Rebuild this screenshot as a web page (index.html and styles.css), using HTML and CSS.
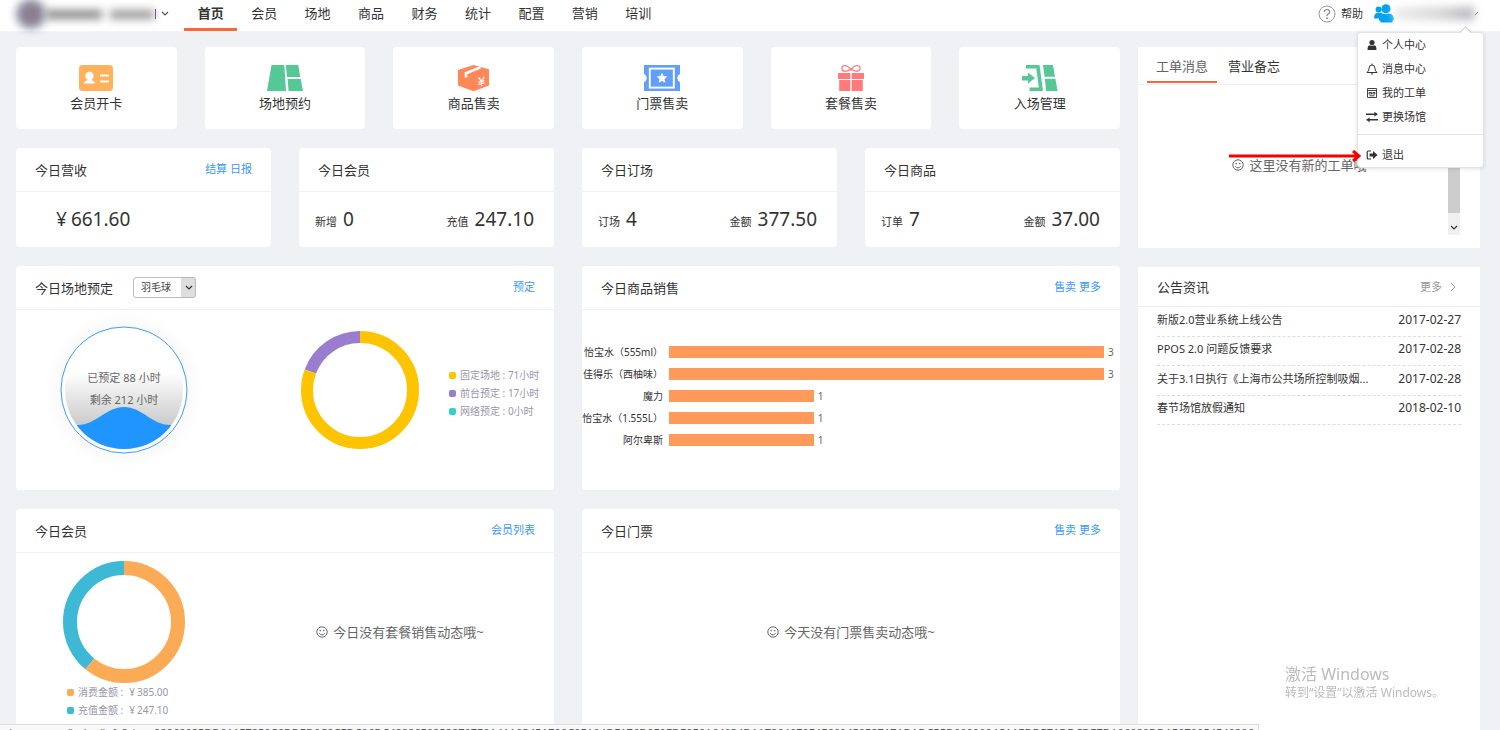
FILE: index.html
```html
<!DOCTYPE html>
<html lang="zh-CN">
<head>
<meta charset="utf-8">
<title>首页</title>
<link rel="stylesheet" href="styles.css">
</head>
<body>
<svg class="defs" aria-hidden="true">
  <symbol id="smile" viewBox="0 0 12 12"><circle cx="6" cy="6" r="5.2" fill="none" stroke="currentColor"/><circle cx="4.2" cy="4.6" r=".8" fill="currentColor"/><circle cx="7.8" cy="4.6" r=".8" fill="currentColor"/><path d="M3.2 7.2Q6 10.6 8.8 7.2" fill="none" stroke="currentColor"/></symbol>
  <symbol id="down" viewBox="0 0 8 6"><path d="M1 1l3 3 3-3" fill="none" stroke="currentColor" stroke-width="1.2"/></symbol>
</svg>

<header class="topbar">
  <button class="brand" aria-label="切换场馆">
    <span class="brand-logo"></span><span class="brand-name"></span><span class="brand-name short"></span>
    <span class="brand-edge"></span>
    <svg class="caret"><use href="#down"/></svg>
  </button>
  <nav class="nav">
    <a href="#" class="active">首页</a><a href="#">会员</a><a href="#">场地</a><a href="#">商品</a><a href="#">财务</a><a href="#">统计</a><a href="#">配置</a><a href="#">营销</a><a href="#">培训</a>
  </nav>
  <div class="account">
    <a href="#" class="help"><svg class="help-icon" viewBox="0 0 18 18"><circle cx="9" cy="9" r="8" fill="none" stroke="#999"/><path d="M6.4 7Q6.4 4.5 9 4.5T11.6 6.9Q11.6 8.1 10.2 9Q9 9.8 9 11" fill="none" stroke="#888" stroke-width="1.2"/><circle cx="9" cy="13.2" r=".9" fill="#888"/></svg>帮助</a>
    <button class="user" aria-label="账户菜单">
      <svg class="users-icon" viewBox="0 0 20 20" fill="#00a4ee"><circle cx="4.6" cy="5.4" r="3"/><path d="M0 14.5Q0 9.2 3.6 8.8H8V14.5z"/><circle cx="12" cy="4.8" r="4.6"/><path d="M5 16.5Q5 10.2 9 9.6Q12 11 15 9.6Q19.8 10.2 19.8 15.5Q19.8 16.8 18.4 16.8V18.6H6.4V16.8Z"/></svg>
      <span class="user-name"></span>
      <svg class="user-tick" viewBox="0 0 5 6"><path d="M1 4l3-3" stroke="#777" fill="none"/></svg>
    </button>
    <div class="menu">
      <ul>
        <li><a href="#"><svg viewBox="0 0 12 12"><circle cx="6" cy="3.6" r="2.6" fill="#333"/><path d="M1.6 11V9Q1.6 6.4 4 6.2Q6 7.4 8 6.2Q10.4 6.4 10.4 9V11z" fill="#333"/></svg>个人中心</a></li>
        <li><a href="#"><svg viewBox="0 0 12 12" fill="none" stroke="#333"><path d="M1 9.5Q3 8 3 5.5Q3 2 6 2T9 5.5Q9 8 11 9.5zM6 .6V2M5 10.6Q6 11.8 7 10.6"/></svg>消息中心</a></li>
        <li><a href="#"><svg viewBox="0 0 12 12" fill="none" stroke="#444"><path d="M1.5 1.5h9v9h-9zM1.5 3.5h9M3 5.5h2.5v1.5H3zM6.8 5.5H9v1.5H6.8zM3.5 8.8h5"/></svg>我的工单</a></li>
        <li><a href="#"><svg viewBox="0 0 12 12"><path d="M0 3.2h9M3 8.8h9" stroke="#333" stroke-width="1.5"/><path d="M8.4.8L12 3.2 8.4 5.6zM3.6 6.4L0 8.8 3.6 11.2z" fill="#333"/></svg>更换场馆</a></li>
      </ul>
      <ul class="menu-foot">
        <li><a href="#"><svg viewBox="0 0 12 12"><path d="M5 2H2.5Q1.2 2 1.2 3.3V8.7Q1.2 10 2.5 10H5" fill="none" stroke="#333" stroke-width="1.2"/><path d="M3.6 4.5H7V2L11.6 6 7 10V7.5H3.6z" fill="#333"/></svg>退出</a></li>
      </ul>
      <svg class="pointer" viewBox="0 0 132 14"><path d="M0 7H130M124 2l6 5-6 5" fill="none" stroke="#f60000" stroke-width="3"/></svg>
    </div>
  </div>
</header>

<main class="page">
  <div class="main-col">
    <section class="tiles">
      <a href="#" class="card tile"><svg viewBox="0 0 36 28"><rect x="1" y="1" width="34" height="26" rx="3.5" fill="#ffb25b"/><circle cx="11.5" cy="12" r="4.2" fill="#fff"/><path d="M5.6 19.6Q7 16.4 10 16H13Q16 16.4 17.4 19.6z" fill="#fff"/><path d="M22 11.5h9M22 17.5h9" stroke="#fff" stroke-width="1.8"/></svg>会员开卡</a>
      <a href="#" class="card tile"><svg viewBox="0 0 36 28" fill="#55c896"><path d="M4.5 1H17.3L19 27H0zM18.8 1H31.2L33.3 13H20zM20.6 15H33.8L36 27H21.6z"/></svg>场地预约</a>
      <a href="#" class="card tile"><svg viewBox="0 0 36 28"><path d="M17.5 1L33 5.2V21.5L17.5 27.2 2 21.5V6z" fill="#ff8758"/><path d="M10 13.5V9.2L24.5 3.4" fill="none" stroke="#fff" stroke-width="2.6"/><path d="M22.5 13.5l3 3.5 2.8-4.2M25.5 17v5M22.4 18.2l6-1.6M22.4 20.5l6-1.6" fill="none" stroke="#fff" stroke-width="1.3"/></svg>商品售卖</a>
      <a href="#" class="card tile"><svg viewBox="0 0 36 28"><path d="M0 1H36V10Q33.3 11 33.3 14T36 18V27H0V18Q2.7 17 2.7 14T0 10z" fill="#619ff8"/><rect x="5.8" y="4.6" width="24" height="19" fill="none" stroke="#fff" stroke-width="1.9"/><path d="M18 8.6l1.6 3.5 3.8.4-2.9 2.5.9 3.8L18 16.9l-3.4 1.9.9-3.8-2.9-2.5 3.8-.4z" fill="#fff"/></svg>门票售卖</a>
      <a href="#" class="card tile"><svg viewBox="0 0 36 28"><path d="M18 6Q15 1.2 11.5 1.6Q8.4 2.2 9 5Q9.8 7.8 13 7.2Q16 7 18 4.8Q20 7 23 7.2Q26.2 7.8 27 5Q27.6 2.2 24.5 1.6Q21 1.2 18 6z" fill="none" stroke="#ff7a7a" stroke-width="1.3"/><path d="M5 9H17.3V15H5zM18.7 9H31V15H18.7zM6.2 16H17.3V27H6.2zM18.7 16H29.8V27H18.7z" fill="#ff7a7a"/></svg>套餐售卖</a>
      <a href="#" class="card tile"><svg viewBox="0 0 36 28" fill="#55c896"><path d="M4 1H17.5L21 27H7.5V23.4H16.8L14.3 4.6H4zM0 12H6V8.4L13 14 6 19.6V16.4H0zM21 1H31L33 12.8H22.6zM22.8 14.8H33.4L35.6 27H24.2z"/></svg>入场管理</a>
    </section>

    <section class="stats">
      <article class="card">
        <div class="card-head"><h2>今日营收</h2><p class="links"><a href="#">结算</a> <a href="#">日报</a></p></div>
        <div class="stat-row single"><p class="money"><span class="yen">¥</span>661.60</p></div>
      </article>
      <article class="card">
        <div class="card-head"><h2>今日会员</h2></div>
        <div class="stat-row"><p>新增<b>0</b></p><p>充值<b>247.10</b></p></div>
      </article>
      <article class="card">
        <div class="card-head"><h2>今日订场</h2></div>
        <div class="stat-row"><p>订场<b>4</b></p><p>金额<b>377.50</b></p></div>
      </article>
      <article class="card">
        <div class="card-head"><h2>今日商品</h2></div>
        <div class="stat-row"><p>订单<b>7</b></p><p>金额<b>37.00</b></p></div>
      </article>
    </section>

    <section class="panels">
      <article class="card panel">
        <div class="card-head"><h2>今日场地预定</h2>
          <label class="picker"><select aria-label="运动项目"><option>羽毛球</option></select><svg><use href="#down"/></svg></label>
          <p class="links"><a href="#">预定</a></p></div>
        <div class="booking">
          <svg class="gauge" viewBox="0 0 160 160">
            <defs>
              <linearGradient id="shade" x1="0" y1="0" x2="0" y2="1"><stop offset=".35" stop-color="#fff"/><stop offset=".85" stop-color="#c4c4c4"/></linearGradient>
              <radialGradient id="halo"><stop offset=".78" stop-color="#000" stop-opacity=".025"/><stop offset="1" stop-color="#000" stop-opacity="0"/></radialGradient>
              <clipPath id="bowl"><circle cx="80" cy="80" r="59"/></clipPath>
            </defs>
            <circle cx="80" cy="80" r="80" fill="url(#halo)"/>
            <circle cx="80" cy="80" r="63" fill="#fff" stroke="#3d9cfb"/>
            <g clip-path="url(#bowl)"><path d="M21 21H139V139H21z" fill="url(#shade)"/><path d="M21 115H34C52 115 62 97 80 97S108 115 126 115H139V140H21z" fill="#2094ff"/></g>
            <text x="80" y="72">已预定 88 小时</text><text x="80" y="94">剩余 212 小时</text>
          </svg>
          <svg class="donut" viewBox="0 0 118 118" fill="none" stroke-width="12"><circle cx="59" cy="59" r="53" stroke="#9b7dcf" pathLength="88" stroke-dasharray="0 71 17" transform="rotate(-90 59 59)"/><circle cx="59" cy="59" r="53" stroke="#ffc400" pathLength="88" stroke-dasharray="71 17" transform="rotate(-90 59 59)"/></svg>
          <ul class="legend"><li class="gold">固定场地 : 71小时</li><li class="purple">前台预定 : 17小时</li><li class="teal">网络预定 : 0小时</li></ul>
        </div>
      </article>
      <article class="card panel">
        <div class="card-head"><h2>今日商品销售</h2><p class="links"><a href="#">售卖</a> <a href="#">更多</a></p></div>
        <div class="bars">
          <span class="name">怡宝水（555ml）</span><div class="track"><i style="width:100%"></i>3</div>
          <span class="name">佳得乐（西柚味）</span><div class="track"><i style="width:100%"></i>3</div>
          <span class="name">魔力</span><div class="track"><i style="width:33.3%"></i>1</div>
          <span class="name">怡宝水（1.555L）</span><div class="track"><i style="width:33.3%"></i>1</div>
          <span class="name">阿尔卑斯</span><div class="track"><i style="width:33.3%"></i>1</div>
        </div>
      </article>
      <article class="card panel">
        <div class="card-head"><h2>今日会员</h2><p class="links"><a href="#">会员列表</a></p></div>
        <div class="members">
          <div class="member-chart">
            <svg class="donut" viewBox="0 0 122 122" fill="none" stroke-width="14"><circle cx="61" cy="61" r="54" stroke="#3eb9d5" pathLength="632.1" stroke-dasharray="0 385 247.1" transform="rotate(-90 61 61)"/><circle cx="61" cy="61" r="54" stroke="#fbab55" pathLength="632.1" stroke-dasharray="385 247.1" transform="rotate(-90 61 61)"/></svg>
            <ul class="legend"><li class="orange">消费金额 :<span class="yen">¥</span>385.00</li><li class="cyan">充值金额 :<span class="yen">¥</span>247.10</li></ul>
          </div>
          <p class="empty"><svg><use href="#smile"/></svg>今日没有套餐销售动态哦~</p>
        </div>
      </article>
      <article class="card panel">
        <div class="card-head"><h2>今日门票</h2><p class="links"><a href="#">售卖</a> <a href="#">更多</a></p></div>
        <p class="empty tickets"><svg><use href="#smile"/></svg>今天没有门票售卖动态哦~</p>
      </article>
    </section>
  </div>

  <aside class="side-col">
    <section class="box orders">
      <div class="tabs"><button class="active">工单消息</button><button>营业备忘</button></div>
      <div class="order-list">
        <p class="empty"><svg><use href="#smile"/></svg>这里没有新的工单哦</p>
        <div class="scrollbar"><span class="thumb"></span><svg><use href="#down"/></svg></div>
      </div>
    </section>
    <section class="box news">
      <div class="news-head"><h2>公告资讯</h2><a href="#">更多<svg viewBox="0 0 6 10"><path d="M1 1l4 4-4 4" fill="none" stroke="currentColor"/></svg></a></div>
      <ul class="news-list">
        <li><a href="#">新版2.0营业系统上线公告</a><time>2017-02-27</time></li>
        <li><a href="#">PPOS 2.0 问题反馈要求</a><time>2017-02-28</time></li>
        <li><a href="#">关于3.1日执行《上海市公共场所控制吸烟...</a><time>2017-02-28</time></li>
        <li><a href="#">春节场馆放假通知</a><time>2018-02-10</time></li>
      </ul>
    </section>
  </aside>
</main>

<div class="watermark"><p class="big">激活 Windows</p><p>转到“设置”以激活 Windows。</p></div>
<div class="statusbar"><span class="host">shop</span><span class="path">/index/info?sign=</span>92862025DD011E7250C6DDED0C2CEDC06DC42826E02528707E0A41A0345A700C0EA04DE176D0E0EDE0E6A64034D1A7964070E4E66045052717ADADC55D0000004CA1EDD571DDCDE7DA06020DDA5070054540206</div>
</body>
</html>
```

FILE: styles.css
```css
* { box-sizing: border-box; }
body, h2, p, ul { margin: 0; padding: 0; }
ul { list-style: none; }
html, body { height: 100%; overflow: hidden; }
body {
  display: flex;
  flex-direction: column;
  background: #f0f1f5;
  color: #333;
  font: 13px/20px "Noto Sans", "Noto Sans CJK SC", sans-serif;
}
a { color: inherit; text-decoration: none; }
button { padding: 0; border: 0; background: none; color: inherit; font: inherit; }
svg { display: block; flex: none; }
.defs { position: absolute; width: 0; height: 0; }

/* top bar */
.topbar { display: flex; flex: none; height: 32px; background: #fff; border-bottom: 1px solid #f3f4f7; }
.brand { display: flex; align-items: center; width: 184px; height: 28px; padding-left: 16px; }
.brand-logo { width: 30px; height: 30px; border-radius: 50%; background: radial-gradient(circle, #8a7a8c 20%, #8d98ad 80%); filter: blur(4px); }
.brand-name { width: 56px; height: 9px; background: #888; filter: blur(4px); }
.brand-name.short { width: 44px; margin-left: 8px; background: #999; }
.brand-edge { width: 1px; height: 10px; background: #70408a; margin-left: 1px; }
.caret { width: 8px; height: 6px; margin-left: 5px; color: #555; }
.nav { display: grid; grid-template-columns: repeat(9, 1fr); width: 481px; height: 31px; }
.nav a { display: flex; align-items: center; justify-content: center; padding-bottom: 2px; border-bottom: 3px solid transparent; }
.nav .active { border-color: #f9683a; font-weight: 700; }
.account { position: relative; display: flex; align-items: center; height: 27px; margin-left: auto; padding-right: 21px; }
.help { display: flex; align-items: center; gap: 5px; font-size: 11px; }
.help-icon { width: 18px; height: 18px; }
.user { display: flex; align-items: center; margin-left: 11px; }
.users-icon { width: 20px; height: 20px; }
.user-name { width: 80px; height: 13px; background: linear-gradient(90deg, #eee, #d5d5d5 60%, #b4b4be); filter: blur(4px); }
.user-tick { width: 5px; height: 6px; }

.menu {
  position: absolute;
  z-index: 2;
  top: 32px;
  right: 16px;
  width: 127px;
  background: #fff;
  border: 1px solid #e2e3e6;
  border-radius: 4px;
  box-shadow: 0 1px 4px rgba(0, 0, 0, .12);
  font-size: 11px;
}
.menu::before {
  content: "";
  position: absolute;
  top: -5px;
  right: 13px;
  width: 8px;
  height: 8px;
  background: #fff;
  border: solid #ccc;
  border-width: 1px 0 0 1px;
  transform: rotate(45deg);
}
.menu a { display: flex; align-items: center; gap: 4px; height: 24px; padding-left: 8px; }
.menu svg { width: 12px; height: 12px; }
.menu ul { padding-bottom: 5px; }
.menu .menu-foot { padding: 8px 0 0; border-top: 1px solid #e2e3e6; }
.menu .pointer { position: absolute; right: 122px; bottom: 4px; width: 132px; height: 14px; }

/* page grid */
.page { display: flex; gap: 18px; padding: 15px 20px 0 16px; }
.main-col { flex: 1104; display: grid; gap: 19px; align-content: start; min-width: 0; }
.side-col { flex: 342; display: flex; flex-direction: column; gap: 19px; min-width: 0; }
.card { background: #fff; border-radius: 4px; min-width: 0; }
.tiles { display: grid; grid-template-columns: repeat(6, 1fr); gap: 28px; }
.tile { display: flex; flex-direction: column; align-items: center; gap: 1px; height: 82px; padding-top: 17px; }
.tile svg { width: 36px; height: 28px; }
.stats { display: grid; grid-template-columns: repeat(4, 1fr); gap: 28px; }
.card-head { display: flex; align-items: center; height: 44px; padding: 0 19px; border-bottom: 1px solid #eff0f5; }
h2 { font-size: 13px; font-weight: 400; }
.links { margin-left: auto; padding-bottom: 2px; color: #3b99fc; font-size: 11px; }
.stat-row { display: flex; justify-content: space-between; height: 55px; padding: 13px 20px 0 16px; font-size: 11px; line-height: 28px; }
.stat-row b, .money { font-size: 19px; font-weight: 400; }
.stat-row b { margin-left: 6px; }
.stat-row.single { padding-left: 40px; }
.yen { margin-right: 4px; }
.legend .yen { margin: 0 2px 0 6px; }

/* panels */
.panels { display: grid; grid-template-columns: 1fr 1fr; grid-template-rows: 224px 224px; column-gap: 28px; row-gap: 19px; }
.panel .card-head { border-color: #edf1fa; }
.picker { position: relative; display: flex; margin-left: 20px; }
.picker select { width: 63px; height: 21px; padding: 0 7px; border: 1px solid #bbb; border-radius: 3px; background: linear-gradient(#dedede, #dedede) right / 14px 100% no-repeat #fff; appearance: none; color: #444; font: 10px/19px "Noto Sans", "Noto Sans CJK SC", sans-serif; }
.picker svg { position: absolute; right: 3px; top: 8px; width: 8px; height: 6px; pointer-events: none; }
.booking { display: flex; align-items: center; height: 160px; padding-left: 28px; }
.gauge { width: 160px; height: 160px; }
.gauge text { fill: #666; font-size: 11px; text-anchor: middle; }
.booking .donut { width: 118px; height: 118px; margin-left: 97px; }
.booking .legend { margin: 6px 0 0 30px; }
.legend { color: #9896ac; font-size: 10px; line-height: 18px; white-space: nowrap; }
.legend li { display: flex; align-items: center; }
.legend li::before { content: ""; width: 7px; height: 7px; margin-right: 4px; border-radius: 2px; background: currentColor; }
.legend .gold::before { background: #ffc400; }
.legend .purple::before { background: #9b7dcf; }
.legend .teal::before { background: #36cfc9; }
.legend .orange::before { background: #fbab55; }
.legend .cyan::before { background: #3eb9d5; }
.bars { display: grid; grid-template-columns: 81px 1fr; column-gap: 6px; padding: 31px 16px 0 0; font-size: 10px; line-height: 22px; }
.bars .name { display: flex; justify-content: flex-end; white-space: nowrap; }
.track { display: flex; align-items: center; gap: 4px; color: #666; white-space: nowrap; }
.track i { flex: none; height: 12px; background: #ff9a5a; }
.members { display: flex; padding-top: 8px; }
.member-chart { width: 230px; padding-left: 47px; }
.member-chart .donut { width: 122px; height: 122px; }
.member-chart .legend { padding-left: 4px; }
.empty { display: flex; align-items: center; justify-content: center; gap: 5px; color: #666; }
.empty svg { width: 12px; height: 12px; }
.members .empty { flex: 1; height: 142px; }
.tickets { height: 158px; }

/* side column */
.box { background: #fff; }
.orders { height: 201px; }
.tabs { display: flex; gap: 2px; height: 38px; padding-left: 9px; border-bottom: 1px solid #efefef; }
.tabs button { width: 70px; height: 36px; padding-top: 4px; border-bottom: 2px solid #fff; }
.tabs .active { border-color: #f9683a; color: #666; }
.order-list { display: flex; height: 150px; padding-right: 20px; }
.order-list .empty { flex: 1; height: 160px; padding-left: 13px; }
.scrollbar { display: flex; flex-direction: column; width: 12px; background: #f0f0f0; }
.thumb { height: 128px; background: #cdcdcd; }
.scrollbar svg { width: 8px; height: 6px; margin: 12px 2px 0; color: #333; }
.news { flex: none; height: 490px; }
.news-head { display: flex; align-items: center; justify-content: space-between; height: 40px; padding: 0 24px 0 19px; border-bottom: 1px solid #efefef; }
.news-head a { display: flex; align-items: center; gap: 8px; color: #999; font-size: 11px; }
.news-head svg { width: 6px; height: 10px; }
.news-list { display: grid; grid-auto-rows: 1fr; height: 118px; margin: 0 19px; }
.news-list li { display: flex; align-items: center; justify-content: space-between; padding-bottom: 3px; border-bottom: 1px dashed #ddd; font-size: 11px; white-space: nowrap; }
.news-list time { font-size: 12px; }

/* desktop overlays */
.watermark { position: fixed; right: 56px; bottom: 29px; color: #bbb; font-size: 12px; line-height: 16px; }
.watermark .big { font-size: 16px; line-height: 22px; }
.statusbar { position: fixed; left: 0; bottom: 0; display: flex; width: 1259px; height: 6px; padding: 1px 4px 0; overflow: hidden; background: #f8f8f8; border: solid #ddd; border-width: 1px 1px 0 0; color: #555; font-size: 11px; line-height: 14px; white-space: nowrap; }
.host { width: 62px; }
.path { width: 88px; }
```
